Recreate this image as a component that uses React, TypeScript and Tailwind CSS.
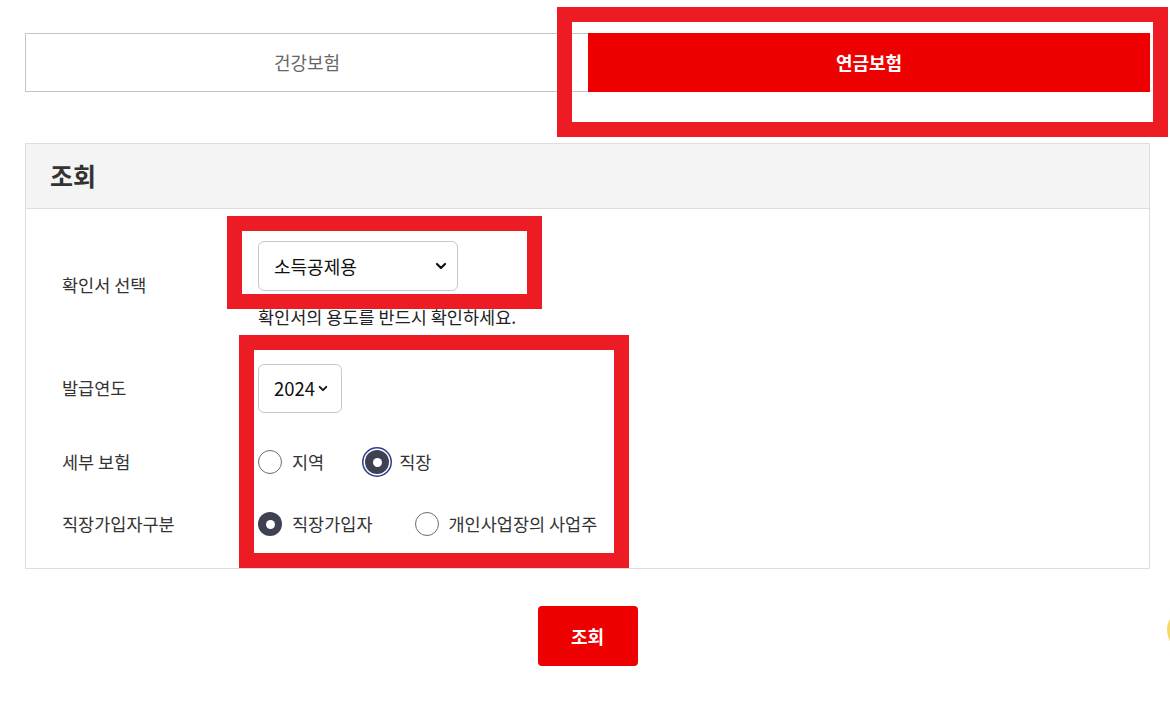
const font = { fontFamily: '"Noto Sans CJK KR", "Noto Sans", sans-serif' };

function Chevron({ className }: { className?: string }) {
  return (
    <svg className={className} viewBox="0 0 12 8" fill="none" stroke="#111" strokeWidth="2.2" strokeLinecap="round" strokeLinejoin="round">
      <polyline points="2 2 6 6 10 2" />
    </svg>
  );
}

function Radio({ checked, focused, label }: { checked?: boolean; focused?: boolean; label: string }) {
  return (
    <label className="flex items-center gap-[10px] text-[17.5px] text-[#333]">
      {checked ? (
        <span
          className={`w-[24px] h-[24px] rounded-full flex items-center justify-center bg-[#3d4152] ${
            focused ? 'ring-[1.5px] ring-offset-[1.5px] ring-[#2b3a8f] ring-offset-white' : ''
          }`}
        >
          <span className="w-[9px] h-[9px] rounded-full bg-white" />
        </span>
      ) : (
        <span className="w-[24px] h-[24px] rounded-full border border-[#6b6b6b] bg-white" />
      )}
      <span>{label}</span>
    </label>
  );
}

export default function App() {
  return (
    <div className="relative w-[1170px] h-[712px] overflow-hidden bg-white" style={font}>
      <div className="pl-[25px] pr-[20px] pt-[33px]">
        {/* Tabs */}
        <div className="flex h-[59px]">
          <button className="flex-1 border border-r-0 border-[#c4c4c4] text-[18px] text-[#666]">건강보험</button>
          <button className="flex-1 bg-[#ee0000] text-[18px] font-bold text-white">연금보험</button>
        </div>

        {/* Panel */}
        <div className="mt-[51px] border border-[#dddddd]">
          <div className="h-[65px] bg-[#f4f4f4] border-b border-[#dddddd] flex items-center pl-[24px]">
            <h2 className="text-[25px] font-bold text-[#333]">조회</h2>
          </div>
          <div className="pt-[32px] pb-[32px]">
            <div className="flex items-center">
              <div className="w-[232px] pl-[36px] text-[17.5px] text-[#333]">확인서 선택</div>
              <div>
                <div className="w-[200px] h-[50px] border border-[#c8c8c8] rounded-[6px] flex items-center justify-between pl-[15px] pr-[10px] text-[18px] text-[#111]">
                  <span>소득공제용</span>
                  <Chevron className="w-[12px] h-[8px]" />
                </div>
                <div className="mt-[14px] text-[17.5px] leading-[24px] text-[#222]">확인서의 용도를 반드시 확인하세요.</div>
              </div>
            </div>
            <div className="flex items-center mt-[35px]">
              <div className="w-[232px] pl-[36px] text-[17.5px] text-[#333]">발급연도</div>
              <div className="w-[84px] h-[49px] border border-[#c8c8c8] rounded-[6px] flex items-center gap-[3px] pl-[15px] text-[18.5px] text-[#111]">
                <span>2024</span>
                <Chevron className="w-[10px] h-[7px]" />
              </div>
            </div>
            <div className="flex items-center mt-[37px] h-[24px]">
              <div className="w-[232px] pl-[36px] text-[17.5px] text-[#333]">세부 보험</div>
              <div className="flex items-center gap-[41px]">
                <Radio label="지역" />
                <Radio label="직장" checked focused />
              </div>
            </div>
            <div className="flex items-center mt-[38px] h-[24px]">
              <div className="w-[232px] pl-[36px] text-[17.5px] text-[#333]">직장가입자구분</div>
              <div className="flex items-center gap-[42px]">
                <Radio label="직장가입자" checked />
                <Radio label="개인사업장의 사업주" />
              </div>
            </div>
          </div>
        </div>

        <div className="flex justify-center mt-[37px]">
          <button className="w-[100px] h-[60px] rounded-[4px] bg-[#ee0000] text-white text-[18px] font-semibold">조회</button>
        </div>
      </div>

      {/* annotation boxes */}
      <div className="absolute left-[557px] top-[7px] w-[611px] h-[130px] border-[15px] border-[#ed1c24] pointer-events-none" />
      <div className="absolute left-[227px] top-[216px] w-[315px] h-[93px] border-[15px] border-[#ed1c24] pointer-events-none" />
      <div className="absolute left-[239px] top-[335px] w-[390px] h-[233px] border-[15px] border-[#ed1c24] pointer-events-none" />

      {/* edge of floating widget */}
      <div className="absolute left-[1167px] top-[608px] w-[44px] h-[44px] rounded-full bg-[#f6d964]" />
    </div>
  );
}
